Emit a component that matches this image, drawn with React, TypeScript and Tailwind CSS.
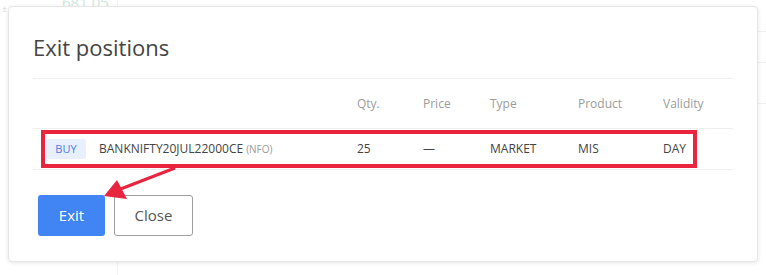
import React from "react";

export default function App() {
  return (
    <div className="relative w-[766px] h-[275px] overflow-hidden bg-white font-['Open_Sans',sans-serif]">
      {/* faint background content behind the dialog */}
      <div className="absolute left-[62px] top-[-9px] text-[15px] text-[#cfe9da]">681.05</div>
      <div className="absolute left-[2px] top-[2px] text-[9px] text-[#d8d8d8]">±</div>
      <div className="absolute left-[117px] top-0 h-[275px] w-px bg-[#f4f4f4]" />
      <div className="absolute right-0 top-[31px] h-px w-[8px] bg-[#f0f0f0]" />
      <div className="absolute right-0 top-[62px] h-px w-[8px] bg-[#f0f0f0]" />
      <div className="absolute right-0 top-[103px] h-px w-[8px] bg-[#f0f0f0]" />

      {/* dialog */}
      <div className="relative ml-[8px] mt-[6px] w-[750px] rounded-[4px] border border-[#e6e6e6] bg-white px-[24px] shadow-[0_1px_4px_rgba(0,0,0,0.10)]">
        <div className="border-b border-[#eeeeee] pt-[25px] pb-[16px]">
          <h2 className="h-[30px] text-[22px] leading-[30px] text-[#444444]">Exit positions</h2>
        </div>

        <div className="grid h-[50px] grid-cols-[324px_66px_67px_88px_85px_70px] items-center border-b border-[#eeeeee] text-[12px] text-[#9b9b9b]">
          <div />
          <div>Qty.</div>
          <div>Price</div>
          <div>Type</div>
          <div>Product</div>
          <div>Validity</div>
        </div>

        <div className="relative grid h-[41px] grid-cols-[324px_66px_67px_88px_85px_70px] items-center border-b border-[#eeeeee] text-[12px] text-[#444444]">
          <div className="flex items-center pl-[13px]">
            <span className="flex h-[20px] w-[40px] items-center justify-center rounded-[2px] bg-[#e9f0fd] text-[11px] text-[#4a7de6]">BUY</span>
            <span className="ml-[13px]">BANKNIFTY20JUL22000CE</span>
            <span className="ml-[3px] text-[10px] text-[#9b9b9b]">(NFO)</span>
          </div>
          <div>25</div>
          <div>—</div>
          <div>MARKET</div>
          <div>MIS</div>
          <div>DAY</div>
          <div className="pointer-events-none absolute left-[8px] top-[1px] h-[38px] w-[656px] border-[4px] border-[#e8243e]" />
        </div>

        <div className="ml-[5px] mt-[25px] flex gap-[9px] pb-[25px]">
          <button className="h-[41px] w-[67px] rounded-[3px] bg-[#4184f3] text-[15px] text-white">Exit</button>
          <button className="h-[41px] w-[79px] rounded-[3px] border border-[#9e9e9e] bg-white text-[15px] text-[#555555]">Close</button>
        </div>
      </div>

      {/* annotation arrow */}
      <svg className="pointer-events-none absolute left-0 top-0" width="766" height="275" viewBox="0 0 766 275">
        <line x1="175" y1="168" x2="118" y2="190" stroke="#e8243e" strokeWidth="3" />
        <polygon points="104,196 117,180 127,199" fill="#e8243e" />
      </svg>
    </div>
  );
}
